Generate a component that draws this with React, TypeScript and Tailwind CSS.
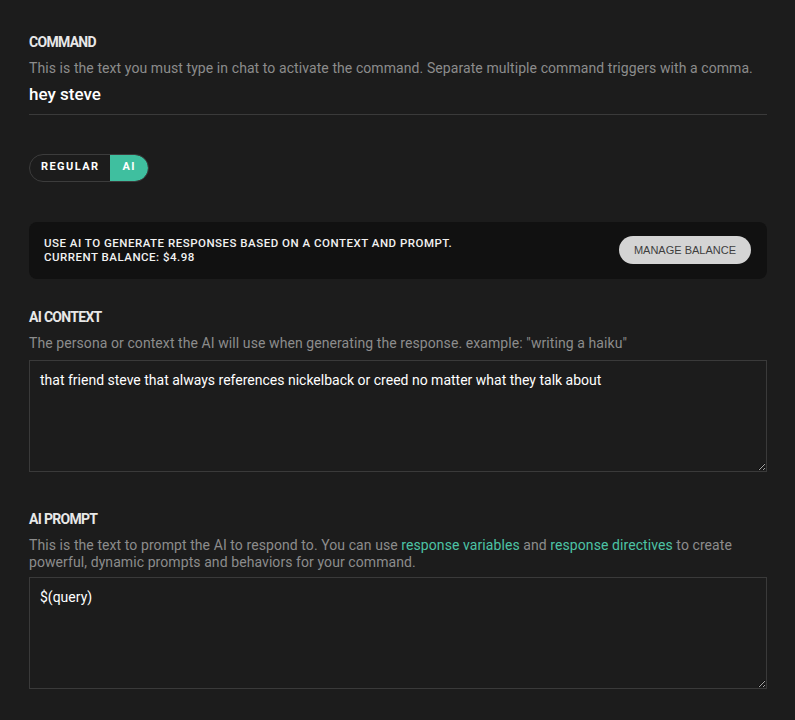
import { useState } from 'react'

const labelCls = "text-[14px] font-bold tracking-[-0.7px] text-[#e8e8e8] uppercase leading-none"
const descCls = "text-[14px] tracking-[0.08px] text-[#8c8c8c] leading-[17px]"

export default function App() {
  const [mode, setMode] = useState<'regular' | 'ai'>('ai')
  const [context, setContext] = useState(
    'that friend steve that always references nickelback or creed no matter what they talk about'
  )
  const [prompt, setPrompt] = useState('$(query)')

  return (
    <div className="min-h-screen bg-[#1c1c1c] px-[29px] pt-[35px] pb-8 font-['Roboto',sans-serif] text-white">
      {/* Command */}
      <div>
        <p className={labelCls}>Command</p>
        <p className={`${descCls} mt-[11px]`}>
          This is the text you must type in chat to activate the command. Separate multiple command triggers with a comma.
        </p>
        <input
          defaultValue="hey steve"
          className="w-[738px] bg-transparent border-b border-[#3a3a3a] pt-[5px] pb-[6px] text-[17px] font-medium text-white outline-none"
        />
      </div>

      {/* Mode toggle */}
      <div className="mt-[39px] inline-flex h-[28px] rounded-full border border-[#3c3c3c] overflow-hidden">
        <button
          onClick={() => setMode('regular')}
          className={`px-[11px] text-[11px] font-bold tracking-[0.13em] ${mode === 'regular' ? 'bg-[#3fbf9f] text-white' : 'text-white'}`}
        >
          REGULAR
        </button>
        <button
          onClick={() => setMode('ai')}
          className={`px-[12px] text-[11px] font-bold tracking-[0.13em] rounded-r-full ${mode === 'ai' ? 'bg-[#3fbf9f] text-white' : 'text-white'}`}
        >
          AI
        </button>
      </div>

      {/* Balance box */}
      <div className="mt-[40px] w-[738px] h-[57px] rounded-lg bg-[#111111] flex items-center justify-between pl-[15px] pr-[16px]">
        <div className="text-[11.5px] font-medium tracking-[0.5px] leading-[14px] text-[#f2f2f2]">
          <p>USE AI TO GENERATE RESPONSES BASED ON A CONTEXT AND PROMPT.</p>
          <p>CURRENT BALANCE: $4.98</p>
        </div>
        <button className="h-[28px] px-[15px] rounded-full bg-[#d4d4d4] text-[11px] text-[#3e3e3e] font-['Liberation_Sans',sans-serif]">
          MANAGE BALANCE
        </button>
      </div>

      {/* AI Context */}
      <div className="mt-[31px]">
        <p className={labelCls}>AI Context</p>
        <p className={`${descCls} mt-[11px]`}>
          The persona or context the AI will use when generating the response. example: "writing a haiku"
        </p>
        <textarea
          value={context}
          onChange={e => setContext(e.target.value)}
          className="mt-[8px] block w-[738px] h-[112px] bg-[#1c1c1c] border border-[#3a3a3a] px-[10px] py-[11px] text-[14px] leading-[17px] text-white outline-none resize-y"
        />
      </div>

      {/* AI Prompt */}
      <div className="mt-[40px]">
        <p className={labelCls}>AI Prompt</p>
        <p className={`${descCls} mt-[11px]`}>
          This is the text to prompt the AI to respond to. You can use{' '}
          <a className="text-[#4cc3a5]">response variables</a> and{' '}
          <a className="text-[#4cc3a5]">response directives</a> to create powerful, dynamic prompts and behaviors for your command.
        </p>
        <textarea
          value={prompt}
          onChange={e => setPrompt(e.target.value)}
          className="mt-[6px] block w-[738px] h-[112px] bg-[#1c1c1c] border border-[#3a3a3a] px-[10px] py-[11px] text-[14px] leading-[17px] text-white outline-none resize-y"
        />
      </div>
    </div>
  )
}
